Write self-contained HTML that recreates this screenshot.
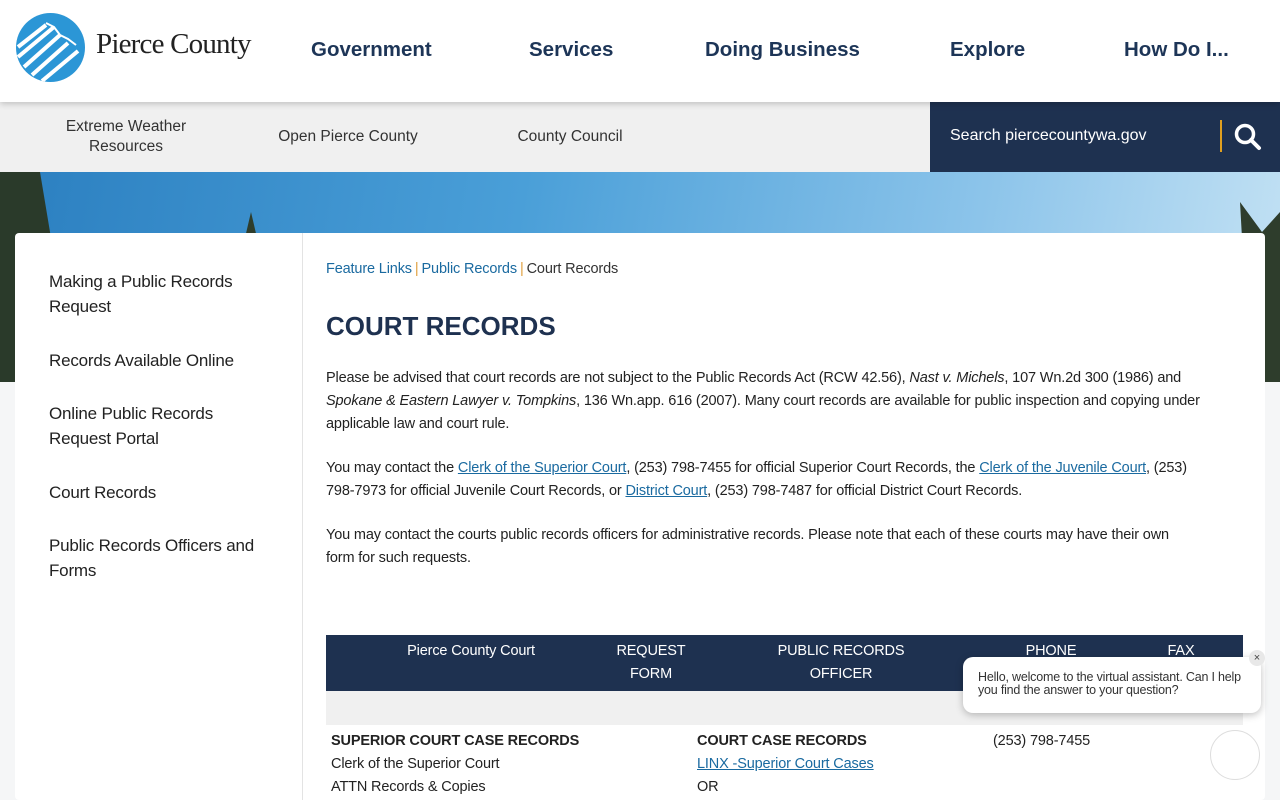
<!DOCTYPE html>
<html><head><meta charset="utf-8"><style>
*{box-sizing:border-box;margin:0;padding:0}
html,body{width:1280px;height:800px;overflow:hidden}
body{font-family:"Liberation Sans",sans-serif;background:#f5f6f7;position:relative;color:#222}
.hdr{position:absolute;top:0;left:0;width:1280px;height:102px;background:#fff;box-shadow:0 2px 6px rgba(0,0,0,.2);z-index:3}
.logo{position:absolute;left:16px;top:13px;width:69px;height:69px;border-radius:50%;background:#2b96d6;overflow:hidden}
.logotxt{position:absolute;left:96px;top:28px;font-family:"Liberation Serif",serif;font-size:29px;color:#222;letter-spacing:-0.8px}
.nav a{position:absolute;top:38px;font-size:20.5px;font-weight:bold;color:#1d3557;text-decoration:none}
.sub{position:absolute;top:102px;left:0;width:930px;height:70px;background:#f0f0f0}
.sub div{position:absolute;font-size:15.5px;color:#333;text-align:center;line-height:20px}
.search{position:absolute;top:102px;left:930px;width:350px;height:70px;background:#1e3150;color:#fff;font-size:16px}
.hero{position:absolute;top:172px;left:0;width:1280px;height:210px;background:linear-gradient(100deg,#2b7fc0 0%,#4a9fd8 40%,#8cc4ea 75%,#c4e2f4 100%)}
.card{position:absolute;top:233px;left:15px;width:1250px;height:567px;background:#fff;border-radius:4px;z-index:2}
.side{position:absolute;left:0;top:0;width:288px;height:567px;border-right:1px solid #e3e3e3}
.side div{position:absolute;left:34px;font-size:17px;color:#222;line-height:25px;letter-spacing:-0.2px}
.main{position:absolute;left:311px;top:0;width:920px;font-size:14.5px;line-height:23px;color:#222;letter-spacing:-0.15px}
a.l{color:#1a6aa0;text-decoration:underline}
.bc{position:absolute;top:25px;font-size:14.5px;color:#333}
.bc a{color:#1a6aa0;text-decoration:none}
.bc span{color:#e0a040;margin:0 3px}
h1{position:absolute;top:82px;font-size:26px;color:#1e3150;font-weight:bold;letter-spacing:0}
p{position:absolute;left:0;width:905px}
.th{position:absolute;top:402px;left:0;width:917px;height:56px;background:#1e3150;color:#fff;font-size:14.5px}
.th div{position:absolute;text-align:center;line-height:23px;top:5px}
.gr{position:absolute;top:458px;left:0;width:917px;height:34px;background:#f0f0f0}
.chat{position:absolute;left:963px;top:657px;width:298px;height:56px;background:#fff;border-radius:10px;box-shadow:0 2px 8px rgba(0,0,0,.25);z-index:5;font-size:12.5px;line-height:13px;padding:14px 15px;color:#333;letter-spacing:-0.2px}
</style></head><body>
<div class="hdr">
<div class="logo"><svg width="69" height="69" viewBox="0 0 69 69"><g stroke="#fff" stroke-width="4" fill="none"><path d="M2 44L38 14"/><path d="M8 54L44 22"/><path d="M16 62L52 30"/><path d="M26 68L62 38"/><path d="M2 34L30 12"/></g><path d="M30 10L38 14L44 22L52 26L60 32" stroke="#fff" stroke-width="2" fill="none"/></svg></div>
<div class="logotxt">Pierce County</div>
<div class="nav"><a style="left:311px">Government</a><a style="left:529px">Services</a><a style="left:705px">Doing Business</a><a style="left:950px">Explore</a><a style="left:1124px">How Do I...</a></div>
</div>
<div class="sub"><div style="left:40px;top:15px;width:172px">Extreme Weather<br>Resources</div><div style="left:258px;top:25px;width:180px">Open Pierce County</div><div style="left:495px;top:25px;width:150px">County Council</div></div>
<div class="search"><span style="position:absolute;left:20px;top:25px">Search piercecountywa.gov</span><div style="position:absolute;left:290px;top:18px;width:2px;height:32px;background:#e0a020"></div><svg style="position:absolute;left:304px;top:21px" width="28" height="28" viewBox="0 0 28 28"><circle cx="11" cy="11" r="8.5" stroke="#fff" stroke-width="3.5" fill="none"/><path d="M17 17L25 25" stroke="#fff" stroke-width="4" stroke-linecap="round"/></svg></div>
<div class="hero"><svg width="1280" height="210"><path d="M0 0L40 0L60 120L70 210L0 210Z" fill="#2a3a2a"/><path d="M1240 30L1262 60L1280 40L1280 210L1250 210Z" fill="#2e3d2c"/><path d="M251 40L258 70L244 70Z" fill="#2e3d2c"/></svg></div>
<div class="card">
<div class="side">
<div style="top:36px">Making a Public Records<br>Request</div>
<div style="top:115px">Records Available Online</div>
<div style="top:168px">Online Public Records<br>Request Portal</div>
<div style="top:247px">Court Records</div>
<div style="top:300px">Public Records Officers and<br>Forms</div>
</div>
<div class="main">
<div class="bc"><a>Feature Links</a><span>|</span><a>Public Records</a><span>|</span>Court Records</div>
<h1>COURT RECORDS</h1>
<p style="top:134px">Please be advised that court records are not subject to the Public Records Act (RCW 42.56), <i>Nast v. Michels</i>, 107 Wn.2d 300 (1986) and<br><i>Spokane &amp; Eastern Lawyer v. Tompkins</i>, 136 Wn.app. 616 (2007). Many court records are available for public inspection and copying under<br>applicable law and court rule.</p>
<p style="top:224px">You may contact the <a class="l">Clerk of the Superior Court</a>, (253) 798-7455 for official Superior Court Records, the <a class="l">Clerk of the Juvenile Court</a>, (253)<br>798-7973 for official Juvenile Court Records, or <a class="l">District Court</a>, (253) 798-7487 for official District Court Records.</p>
<p style="top:291px">You may contact the courts public records officers for administrative records. Please note that each of these courts may have their own<br>form for such requests.</p>
<div class="th"><div style="left:50px;width:190px;top:5px">Pierce County Court</div><div style="left:280px;width:90px">REQUEST<br>FORM</div><div style="left:430px;width:170px">PUBLIC RECORDS<br>OFFICER</div><div style="left:680px;width:90px">PHONE</div><div style="left:820px;width:70px">FAX</div></div>
<div class="gr"></div>
<div style="position:absolute;top:497px;left:5px"><b>SUPERIOR COURT CASE RECORDS</b><br>Clerk of the Superior Court<br>ATTN Records &amp; Copies</div>
<div style="position:absolute;top:497px;left:371px"><b>COURT CASE RECORDS</b><br><a class="l">LINX -Superior Court Cases</a><br>OR</div>
<div style="position:absolute;top:497px;left:667px">(253) 798-7455</div>
</div>
</div>
<div class="chat">Hello, welcome to the virtual assistant. Can I help you find the answer to your question?</div>
<div style="position:absolute;left:1249px;top:650px;width:16px;height:16px;border-radius:50%;background:#e8e8e8;z-index:6;font-size:11px;text-align:center;line-height:16px;color:#444">×</div>
<div style="position:absolute;left:1210px;top:730px;width:50px;height:50px;border-radius:50%;background:#fff;border:1px solid #ddd;z-index:6"></div>
</body></html>
